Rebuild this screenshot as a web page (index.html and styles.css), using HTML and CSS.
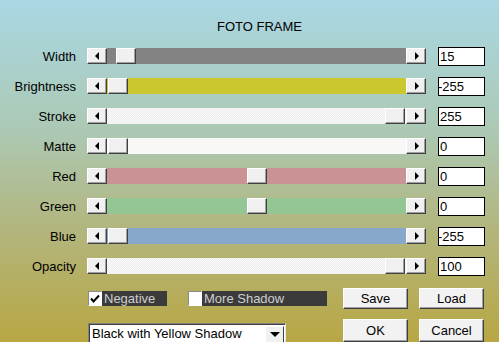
FILE: index.html
```html
<!DOCTYPE html>
<html lang="en">
<head>
    <meta charset="UTF-8">
    <meta name="viewport" content="width=device-width, initial-scale=1.0">
    <title>Foto Frame</title>
    <link rel="stylesheet" href="styles.css">
</head>
<body>
    <div class="title">FOTO FRAME</div>

    <!-- sliders -->
    <div class="sliders">
        <span class="label">Width</span>
        <div class="scrollbar">
            <div class="sb-btn left"></div>
            <div class="track gray"><div class="pad" style="width:9px"></div><div class="thumb"></div></div>
            <div class="sb-btn right"></div>
        </div>
        <div class="value">15</div>

        <span class="label">Brightness</span>
        <div class="scrollbar">
            <div class="sb-btn left"></div>
            <div class="track yellow"><div class="pad" style="width:1px"></div><div class="thumb"></div></div>
            <div class="sb-btn right"></div>
        </div>
        <div class="value minus">-255</div>

        <span class="label">Stroke</span>
        <div class="scrollbar">
            <div class="sb-btn left"></div>
            <div class="track dither"><div class="pad" style="width:278px"></div><div class="thumb"></div></div>
            <div class="sb-btn right"></div>
        </div>
        <div class="value">255</div>

        <span class="label">Matte</span>
        <div class="scrollbar">
            <div class="sb-btn left"></div>
            <div class="track white"><div class="pad" style="width:1px"></div><div class="thumb"></div></div>
            <div class="sb-btn right"></div>
        </div>
        <div class="value">0</div>

        <span class="label">Red</span>
        <div class="scrollbar">
            <div class="sb-btn left"></div>
            <div class="track red"><div class="pad" style="width:140px"></div><div class="thumb"></div></div>
            <div class="sb-btn right"></div>
        </div>
        <div class="value">0</div>

        <span class="label">Green</span>
        <div class="scrollbar">
            <div class="sb-btn left"></div>
            <div class="track green"><div class="pad" style="width:140px"></div><div class="thumb"></div></div>
            <div class="sb-btn right"></div>
        </div>
        <div class="value">0</div>

        <span class="label">Blue</span>
        <div class="scrollbar">
            <div class="sb-btn left"></div>
            <div class="track blue"><div class="pad" style="width:1px"></div><div class="thumb"></div></div>
            <div class="sb-btn right"></div>
        </div>
        <div class="value minus">-255</div>

        <span class="label">Opacity</span>
        <div class="scrollbar">
            <div class="sb-btn left"></div>
            <div class="track dither"><div class="pad" style="width:278px"></div><div class="thumb"></div></div>
            <div class="sb-btn right"></div>
        </div>
        <div class="value">100</div>
    </div>

    <!-- options and buttons -->
    <div class="footer">
        <div class="checks">
            <div class="check">
                <span class="box">
                    <svg width="12" height="12" viewBox="0 0 12 12"><path d="M2 5.5 L4.5 8.5 L10 2.5" fill="none" stroke="#000" stroke-width="2"/></svg>
                </span>
                <span class="check-label neg">Negative</span>
            </div>
            <div class="check">
                <span class="box"></span>
                <span class="check-label more">More Shadow</span>
            </div>
        </div>
        <div class="btn">Save</div>
        <div class="btn">Load</div>

        <div class="select">
            <span class="select-text">Black with Yellow Shadow</span>
            <span class="select-btn"></span>
        </div>
        <div class="btn tall">OK</div>
        <div class="btn tall">Cancel</div>
    </div>
</body>
</html>
```

FILE: styles.css
```css
body {
    margin: 0;
    width: 499px;
    height: 342px;
    overflow: hidden;
    font-family: "Liberation Sans", Arial, sans-serif;
    font-size: 13px;
    color: #000;
    background: linear-gradient(to bottom, #a9d7e4 0%, #acc9b4 38%, #b2b67f 66%, #b8a743 100%);
}

.title {
    height: 22px;
    padding: 19px 0 0 217px;
    line-height: 15px;
}

/* slider grid */
.sliders {
    display: grid;
    grid-template-columns: 76px 339px 48px;
    grid-auto-rows: 30px;
    column-gap: 11px;
    align-items: center;
}

.label {
    text-align: right;
    line-height: 15px;
}

.scrollbar {
    display: flex;
    height: 16px;
}

.sb-btn,
.thumb {
    box-sizing: border-box;
    width: 20px;
    height: 16px;
    background: #f0f0f0;
    border: 1px solid;
    border-color: #fff #404040 #404040 #fff;
    box-shadow: inset -1px -1px #a0a0a0;
}

.sb-btn {
    display: flex;
    align-items: center;
    justify-content: center;
}

.sb-btn::before {
    content: "";
    border-top: 4px solid transparent;
    border-bottom: 4px solid transparent;
}

.sb-btn.left::before {
    border-right: 4px solid #000;
    margin-left: -1px;
}

.sb-btn.right::before {
    border-left: 4px solid #000;
    margin-left: 1px;
}

.track {
    flex: 1;
    display: flex;
}

.pad {
    flex: none;
}

.gray { background: #838383; }
.yellow { background: #cbc72f; }
.white { background: #f8f8f6; }
.red { background: #c99294; }
.green { background: #93c693; }
.blue { background: #87a8cb; }
.dither {
    background: repeating-conic-gradient(#fbfbfb 0 25%, #ececec 0 50%) 0 0 / 2px 2px;
}

.value {
    box-sizing: border-box;
    width: 47px;
    height: 19px;
    margin-left: 1px;
    border: 1px solid #000;
    background: #fff;
    line-height: 17px;
    padding-left: 1px;
}

.value.minus {
    padding-left: 0;
    text-indent: -1px;
}

/* footer */
.footer {
    display: grid;
    grid-template-columns: 244px 65px 65px;
    grid-template-rows: 21px 23px;
    column-gap: 11px;
    row-gap: 10px;
    margin-top: 7px;
    padding-left: 88px;
}

.checks {
    display: flex;
    align-items: center;
    gap: 21px;
}

.check {
    display: flex;
    align-items: center;
}

.box {
    box-sizing: border-box;
    width: 14px;
    height: 15px;
    background: #fff;
    border: 1px solid;
    border-color: #8a8a8a #fff #fff #8a8a8a;
    display: flex;
    align-items: center;
    justify-content: center;
}

.check-label {
    height: 15px;
    line-height: 15px;
    padding-left: 2px;
    box-sizing: border-box;
    background: #3b3b3b;
    color: #cfcfcf;
}

.neg { width: 65px; }
.more { width: 125px; }

.btn {
    box-sizing: border-box;
    background: #f2f2f2;
    border: 1px solid;
    border-color: #fff #404040 #404040 #fff;
    box-shadow: inset -1px -1px #a0a0a0;
    text-align: center;
    line-height: 19px;
}

.btn.tall {
    line-height: 21px;
}

.select {
    box-sizing: border-box;
    width: 198px;
    height: 21px;
    margin-top: 4px;
    display: flex;
    background: #fff;
    border: 1px solid;
    border-color: #808080 #e8e8e8 #e8e8e8 #808080;
    box-shadow: inset 1px 1px #404040;
}

.select-text {
    flex: 1;
    padding: 2px 0 0 3px;
    line-height: 15px;
}

.select-btn {
    box-sizing: border-box;
    width: 19px;
    height: 17px;
    margin: 2px 1px 0 0;
    background: #f0f0f0;
    border: 1px solid;
    border-color: #fff #404040 #404040 #fff;
    display: flex;
    align-items: center;
    justify-content: center;
}

.select-btn::before {
    content: "";
    border-left: 5px solid transparent;
    border-right: 5px solid transparent;
    border-top: 5px solid #000;
}
```
